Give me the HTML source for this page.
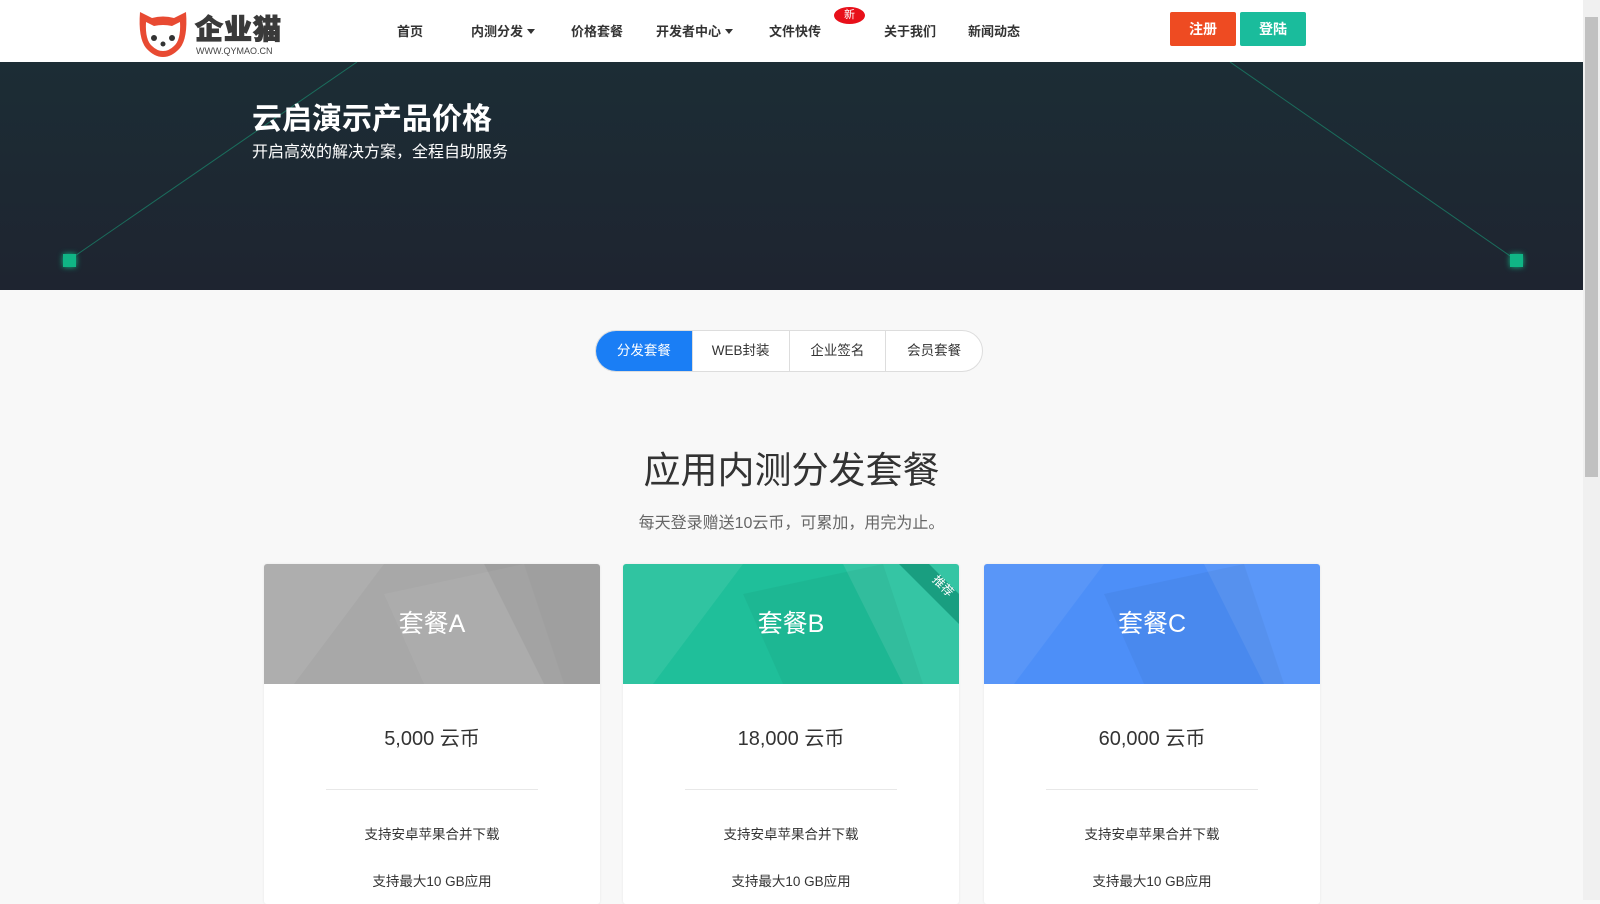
<!DOCTYPE html>
<html><head><meta charset="utf-8"><style>
*{margin:0;padding:0;box-sizing:border-box}
body{width:1600px;height:900px;overflow:hidden;background:#f8f8f8;font-family:"Liberation Sans","Noto Sans CJK SC",sans-serif;position:relative}
.nav{position:absolute;left:0;top:0;width:1583px;height:62px;background:#fff}
.nav a{position:absolute;top:21px;font-size:13px;color:#333;font-weight:bold;text-decoration:none}
.caret{display:inline-block;border-left:4px solid transparent;border-right:4px solid transparent;border-top:5px solid #333;margin-left:4px;vertical-align:2px}
.btn{position:absolute;top:12px;height:34px;width:66px;color:#fff;font-size:14px;font-weight:bold;text-align:center;line-height:34px;border-radius:2px}
.hero{position:absolute;left:0;top:62px;width:1583px;height:228px;background:linear-gradient(180deg,#1c2d35,#1e2430);overflow:hidden}
.sq{position:absolute;width:13px;height:13px;background:#10b585;box-shadow:0 0 6px #10b585}
.tabs{position:absolute;left:595px;top:330px;width:388px;height:42px;border:1px solid #ddd;border-radius:21px;background:#fff;display:flex;overflow:hidden}
.tabs div{flex:1;text-align:center;line-height:40px;font-size:13.5px;color:#333;border-left:1px solid #ddd}
.tabs div:first-child{border-left:none;background:#1a7ef5;color:#fff}
.card{position:absolute;top:564px;width:336px;height:340px;background:#fff;border-radius:3px;overflow:hidden;box-shadow:0 0 2px #e5e5e5}
.ch{height:120px;position:relative;overflow:hidden;color:#fff;font-size:25px;text-align:center;line-height:120px}
.ch svg{position:absolute;left:0;top:0}
.ch span{position:relative}
.price{text-align:center;font-size:20px;color:#333;margin-top:38px}
.hr{width:212px;height:1px;background:#e8e8e8;margin:38px auto 0}
.f{text-align:center;font-size:13.5px;color:#333;margin-top:33px}
.f+.f{margin-top:27px}
</style></head><body>
<div class="nav">
 <svg style="position:absolute;left:136px;top:8px" width="54" height="50" viewBox="0 0 54 50">
  <path d="M4 4 L16 10 Q27 7 38 10 L50 4 Q52 30 44 40 Q36 49 27 49 Q18 49 10 40 Q2 30 4 4Z" fill="#e84a32"/>
  <path d="M10 14 L18 18 Q27 16 36 18 L44 14 Q45 32 38 38 Q33 43 27 43 Q21 43 16 38 Q9 32 10 14Z" fill="#fff"/>
  <circle cx="18" cy="30" r="3" fill="#333"/><circle cx="36" cy="30" r="3" fill="#333"/><circle cx="27" cy="36" r="2.5" fill="#333"/>
 </svg>
 <div style="position:absolute;left:195px;top:8px;font-size:28px;font-weight:900;color:#3a3a3a;letter-spacing:1px;-webkit-text-stroke:1px #3a3a3a">企业猫</div>
 <div style="position:absolute;left:196px;top:46px;font-size:9px;color:#444">WWW.QYMAO.CN</div>
 <a style="left:397px">首页</a>
 <a style="left:471px">内测分发<span class="caret"></span></a>
 <a style="left:571px">价格套餐</a>
 <a style="left:656px">开发者中心<span class="caret"></span></a>
 <a style="left:769px">文件快传</a>
 <div style="position:absolute;left:834px;top:7px;width:31px;height:17px;background:#e8101a;border-radius:50%;color:#fff;font-size:11px;text-align:center;line-height:17px">新</div>
 <a style="left:884px">关于我们</a>
 <a style="left:968px">新闻动态</a>
 <div class="btn" style="left:1170px;background:#ee4b22">注册</div>
 <div class="btn" style="left:1240px;background:#1abc9c">登陆</div>
</div>
<div class="hero">
 <svg width="1583" height="228" style="position:absolute;left:0;top:0"><line x1="69" y1="198" x2="357" y2="0" stroke="#1a8a6e" stroke-width="1" opacity=".7"/><line x1="1516" y1="198" x2="1230" y2="0" stroke="#1a8a6e" stroke-width="1" opacity=".7"/></svg>
 <div class="sq" style="left:63px;top:192px"></div>
 <div class="sq" style="left:1510px;top:192px"></div>
 <div style="position:absolute;left:252px;top:32px;font-size:30px;font-weight:bold;color:#fff">云启演示产品价格</div>
 <div style="position:absolute;left:252px;top:76px;font-size:16px;color:#fff">开启高效的解决方案，全程自助服务</div>
</div>
<div class="tabs"><div>分发套餐</div><div>WEB封装</div><div>企业签名</div><div>会员套餐</div></div>
<div style="position:absolute;left:0;width:1583px;top:440px;text-align:center;font-size:37px;color:#333">应用内测分发套餐</div>
<div style="position:absolute;left:0;width:1583px;top:509px;text-align:center;font-size:16px;color:#666">每天登录赠送10云币，可累加，用完为止。</div>

<div class="card" style="left:264px"><div class="ch" style="background:#a8a8a8"><svg width="336" height="120"><polygon points="0,0 120,0 30,120 0,120" fill="#fff" opacity=".07"/><polygon points="220,0 336,0 336,120 280,120" fill="#000" opacity=".05"/><polygon points="120,30 260,0 300,120 160,120" fill="#fff" opacity=".05"/></svg><span>套餐A</span></div>
<div class="price">5,000 云币</div><div class="hr"></div><div class="f">支持安卓苹果合并下载</div><div class="f">支持最大10 GB应用</div></div>

<div class="card" style="left:623px"><div class="ch" style="background:#1fbf9a"><svg width="336" height="120"><polygon points="0,0 120,0 30,120 0,120" fill="#fff" opacity=".08"/><polygon points="220,0 336,0 336,120 280,120" fill="#fff" opacity=".1"/><polygon points="120,30 260,0 300,120 160,120" fill="#000" opacity=".04"/><polygon points="276,0 306,0 336,30 336,60" fill="#199e80"/></svg><span>套餐B</span><div style="position:absolute;right:4px;top:16px;font-size:12px;line-height:12px;transform:rotate(45deg)">推荐</div></div>
<div class="price">18,000 云币</div><div class="hr"></div><div class="f">支持安卓苹果合并下载</div><div class="f">支持最大10 GB应用</div></div>

<div class="card" style="left:984px"><div class="ch" style="background:#4d8ff8"><svg width="336" height="120"><polygon points="0,0 120,0 30,120 0,120" fill="#fff" opacity=".07"/><polygon points="220,0 336,0 336,120 280,120" fill="#fff" opacity=".08"/><polygon points="120,30 260,0 300,120 160,120" fill="#000" opacity=".04"/></svg><span>套餐C</span></div>
<div class="price">60,000 云币</div><div class="hr"></div><div class="f">支持安卓苹果合并下载</div><div class="f">支持最大10 GB应用</div></div>

<div style="position:absolute;left:1583px;top:0;width:17px;height:900px;background:#f0f0f0"><div style="position:absolute;left:2px;top:17px;width:13px;height:460px;background:#c1c1c1"></div></div>
</body></html>
